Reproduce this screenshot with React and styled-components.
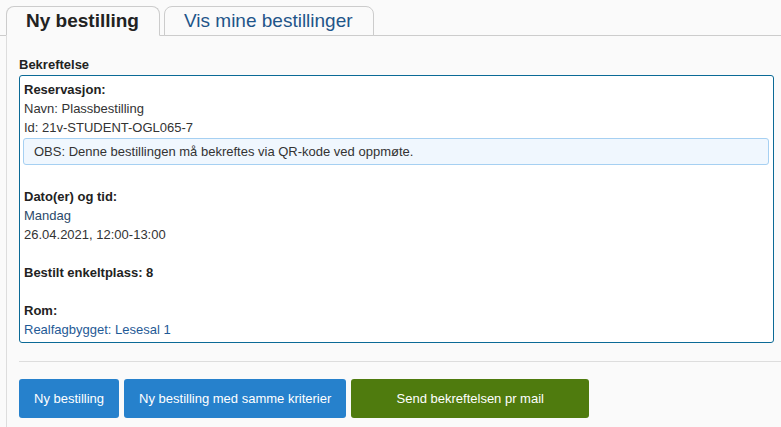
import React from 'react';
import styled, { createGlobalStyle } from 'styled-components';

const GlobalStyle = createGlobalStyle`
  html, body {
    margin: 0;
    padding: 0;
    background: #fafafa;
    font-family: "Liberation Sans", Arial, sans-serif;
    color: #333;
  }
`;

const Page = styled.div`
  width: 781px;
  height: 427px;
  overflow: hidden;
  display: flex;
  flex-direction: column;
`;

const TabBar = styled.nav`
  display: flex;
  gap: 4px;
  padding: 6px 0 0 6px;
  border-bottom: 1px solid #ccc;
`;

const Tab = styled.div`
  height: 28px;
  padding: 0 20px 0 19px;
  display: flex;
  align-items: center;
  font-size: 19px;
  font-weight: ${props => props.active ? 'bold' : 'normal'};
  color: ${props => props.active ? '#222' : '#1f5589'};
  background: #fafafa;
  border: 1px solid #ccc;
  border-bottom-color: ${props => props.active ? '#fafafa' : '#ccc'};
  border-radius: 8px 8px 0 0;
  margin-bottom: -1px;
  cursor: pointer;
`;

const Panel = styled.div`
  flex: 1;
  margin-left: 6px;
  border-left: 1px solid #ddd;
  padding: 21px 0 0 12px;
`;

const Heading = styled.h4`
  margin: 0 0 2px 0;
  font-size: 13px;
  font-weight: bold;
  line-height: 16px;
  color: #222;
`;

const Receipt = styled.div`
  display: flex;
  flex-direction: column;
  margin-right: 7px;
  background: #fff;
  border: 1px solid #0b6a96;
  border-radius: 3px;
  padding: 4px 4px 3px 4px;
  font-size: 13px;
  line-height: 19px;
`;

const Label = styled.div`
  font-weight: bold;
  color: #222;
  margin-top: ${props => props.spaced ? '19px' : '0'};
`;

const Line = styled.div`
  color: ${props => props.tone === 'day' ? '#2c4a6a' : props.tone === 'link' ? '#1f5a96' : '#333'};
`;

const Notice = styled.div`
  margin: 1px 0 3px -1px;
  padding: 3px 10px;
  background: #f0f7fe;
  border: 1px solid #a6d0f2;
  border-radius: 3px;
  color: #333;
`;

const Divider = styled.hr`
  margin: 18px 0 17px 0;
  border: 0;
  border-top: 1px solid #ddd;
`;

const ButtonRow = styled.div`
  display: flex;
  gap: 5px;
`;

const Button = styled.button`
  height: 39px;
  padding: 0 15px;
  min-width: ${props => props.wide ? '238px' : 'auto'};
  border: 0;
  border-radius: 3px;
  background: ${props => props.variant === 'green' ? '#4f7b0e' : '#2681cc'};
  color: #fff;
  font-family: "Liberation Sans", Arial, sans-serif;
  font-size: 13px;
  cursor: pointer;
`;

const App = () => (
  <Page>
    <GlobalStyle />
    <TabBar>
      <Tab active>Ny bestilling</Tab>
      <Tab>Vis mine bestillinger</Tab>
    </TabBar>
    <Panel>
      <Heading>Bekreftelse</Heading>
      <Receipt>
        <Label>Reservasjon:</Label>
        <Line>Navn: Plassbestilling</Line>
        <Line>Id: 21v-STUDENT-OGL065-7</Line>
        <Notice>OBS: Denne bestillingen må bekreftes via QR-kode ved oppmøte.</Notice>
        <Label spaced>Dato(er) og tid:</Label>
        <Line tone="day">Mandag</Line>
        <Line>26.04.2021, 12:00-13:00</Line>
        <Label spaced>Bestilt enkeltplass: 8</Label>
        <Label spaced>Rom:</Label>
        <Line tone="link">Realfagbygget: Lesesal 1</Line>
      </Receipt>
      <Divider />
      <ButtonRow>
        <Button>Ny bestilling</Button>
        <Button>Ny bestilling med samme kriterier</Button>
        <Button variant="green" wide>Send bekreftelsen pr mail</Button>
      </ButtonRow>
    </Panel>
  </Page>
);

export default App;
